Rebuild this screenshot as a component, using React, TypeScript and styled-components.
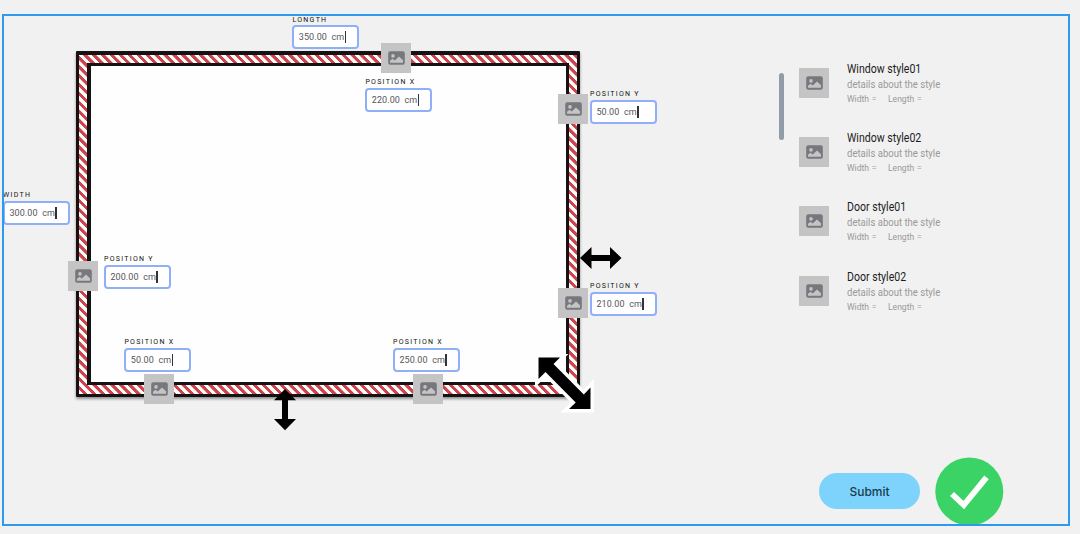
import React from "react";
import styled, { createGlobalStyle } from "styled-components";

const GlobalStyle = createGlobalStyle`
  * { box-sizing: border-box; }
  body { margin: 0; background: #f1f1f1; font-family: Roboto, sans-serif; overflow: hidden; }
`;

const Page = styled.main`
  width: 1080px;
  height: 534px;
  padding: 14px 9px 8px 2px;
`;

const Frame = styled.section`
  position: relative;
  display: flex;
  width: 1068px;
  height: 511.5px;

  &::after {
    content: "";
    position: absolute;
    inset: 0;
    border: 2px solid #2c9af0;
    pointer-events: none;
  }
`;

const Canvas = styled.div`
  position: relative;
  flex: 0 0 777px;
`;

const Wall = styled.div`
  position: absolute;
  left: 74px;
  top: 37px;
  width: 504px;
  height: 346px;
  padding: 8px 8px 9px;
  border: 3px solid #141212;
  border-top-width: 4px;
  border-radius: 1px;
  background: repeating-linear-gradient(45deg, #fff 0 2.8px, #d0434a 3.2px 5.9px, #fff 6.3px);
  box-shadow: 0 2px 3px rgba(0, 0, 0, 0.4);
`;

const Floor = styled.div`
  height: 100%;
  border: solid #141212;
  border-width: 3px 3px 3px 4px;
  background: #fefefe;
`;

const Placed = styled.div<{ $x: number; $y: number }>`
  position: absolute;
  left: ${(p) => p.$x - 2}px;
  top: ${(p) => p.$y - 14}px;
`;

const Thumb = styled.div`
  display: grid;
  place-items: center;
  flex: none;
  width: 30px;
  height: 30px;
  background: #c4c4c4;
`;

const FieldBox = styled.label`
  display: flex;
  flex-direction: column;
  gap: 1px;
  width: 67px;
`;

const FieldLabel = styled.span<{ $drop?: number }>`
  height: 9px;
  padding-top: ${(p) => p.$drop ?? 0}px;
  font-size: 7px;
  line-height: 8px;
  font-weight: 400;
  letter-spacing: 1.28px;
  white-space: nowrap;
  color: #111;
`;

const FieldValue = styled.span`
  display: flex;
  align-items: center;
  height: 24px;
  padding-left: 4.4px;
  border: 2px solid #8fb0f8;
  border-radius: 4px;
  background: #fff;
  color: #55565a;
  font-size: 9px;
  letter-spacing: 0.08px;
  white-space: pre;
`;

const Caret = styled.i`
  width: 1.4px;
  height: 12px;
  margin-left: 0.5px;
  background: #333;
`;

const Arrow = styled.svg`
  display: block;
  overflow: visible;
`;

const Side = styled.aside`
  display: flex;
  flex-direction: column;
  justify-content: space-between;
  flex: 1;
  padding: 47px 65px 0 0;
`;

const Catalog = styled.div`
  display: flex;
  gap: 15px;
`;

const ScrollThumb = styled.div`
  width: 5px;
  height: 67px;
  margin-top: 12px;
  border-radius: 3px;
  background: #919ca7;
`;

const List = styled.ul`
  display: flex;
  flex-direction: column;
  margin: 0;
  padding: 0;
  list-style: none;
`;

const Item = styled.li`
  display: flex;
  gap: 18px;
  height: 69.2px;
  padding-top: 7px;
`;

const Info = styled.div`
  margin-top: -8px;
  white-space: nowrap;
`;

const Title = styled.div`
  height: 17px;
  font-size: 12.5px;
  line-height: 18px;
  color: #1c1c1c;
  transform: scaleX(0.845);
  transform-origin: left;
`;

const Detail = styled.div`
  height: 14px;
  font-size: 11px;
  line-height: 16px;
  color: #999;
  transform: scaleX(0.868);
  transform-origin: left;
`;

const Sizes = styled.div`
  display: flex;
  height: 13px;
  font-size: 9.5px;
  line-height: 15px;
  color: #999;
`;

const Size = styled.span`
  width: 41px;
  transform: scaleX(0.9);
  transform-origin: left;
  word-spacing: 0.8px;
`;

const Actions = styled.div`
  display: flex;
  align-items: center;
  gap: 15px;
  margin-left: 40px;
`;

const Submit = styled.button`
  width: 101px;
  height: 36px;
  padding: 0;
  border: 0;
  border-radius: 18px;
  background: #7dd3fc;
  color: #1a3c4e;
  font: 500 12px Inter, sans-serif;
`;

const ImageIcon = () => (
  <svg width="17" height="14" viewBox="0 0 17 14">
    <rect x="0.2" y="0.3" width="16.6" height="13.4" rx="2" fill="#77787e" />
    <circle cx="5" cy="4.9" r="1.8" fill="#c4c4c4" />
    <path d="M2 11.8V9.8L4.6 7.7L6.7 9.4L11 5.4L15 9.3V11.8Z" fill="#c4c4c4" />
  </svg>
);

const fields = [
  { label: "LONGTH", value: "350.00", x: 292.4, y: 15, drop: 1 },
  { label: "POSITION X", value: "220.00", x: 365.4, y: 77.5 },
  { label: "POSITION Y", value: "50.00", x: 590, y: 89.5 },
  { label: "WIDTH", value: "300.00", x: 3, y: 190.5 },
  { label: "POSITION Y", value: "200.00", x: 104, y: 254.5 },
  { label: "POSITION Y", value: "210.00", x: 590, y: 282.3 },
  { label: "POSITION X", value: "50.00", x: 124.4, y: 338 },
  { label: "POSITION X", value: "250.00", x: 393, y: 338 },
];

const openings = [
  [381, 43],
  [558.4, 94],
  [68, 261],
  [558.4, 288],
  [144.3, 374],
  [413.2, 374],
];

const styles = ["Window style01", "Window style02", "Door style01", "Door style02"];

export default function App() {
  return (
    <>
      <GlobalStyle />
      <Page>
        <Frame>
          <Canvas>
            <Wall>
              <Floor />
            </Wall>
            {openings.map(([x, y]) => (
              <Placed key={`${x}-${y}`} $x={x} $y={y}>
                <Thumb>
                  <ImageIcon />
                </Thumb>
              </Placed>
            ))}
            {fields.map((f) => (
              <Placed key={`${f.x}-${f.y}`} $x={f.x} $y={f.y}>
                <FieldBox>
                  <FieldLabel $drop={f.drop}>{f.label}</FieldLabel>
                  <FieldValue>
                    {f.value}{"  cm"}
                    <Caret />
                  </FieldValue>
                </FieldBox>
              </Placed>
            ))}
            <Placed $x={580.4} $y={247}>
              <Arrow width="42" height="22" viewBox="0 0 42 22">
                <path d="M0 11L11.5 0V8H30V0L41.5 11L30 22V14H11.5V22Z" />
              </Arrow>
            </Placed>
            <Placed $x={274} $y={389}>
              <Arrow width="22" height="42" viewBox="0 0 22 42">
                <path d="M11 0L22 11.2H14V30H22L11 41.2L0 30H8V11.2H0Z" />
              </Arrow>
            </Placed>
            <Placed $x={538} $y={357}>
              <Arrow width="53" height="53" viewBox="0 0 53 53">
                <path
                  d="M0.5 0.5H22L15.5 7L45.8 37.5L52.5 30.5V52H31L37.7 45.5L7.5 15L0.5 22Z"
                  stroke="#fff"
                  strokeWidth="7"
                  strokeMiterlimit="10"
                  paintOrder="stroke"
                />
              </Arrow>
            </Placed>
          </Canvas>
          <Side>
            <Catalog>
              <ScrollThumb />
              <List>
                {styles.map((name) => (
                  <Item key={name}>
                    <Thumb>
                      <ImageIcon />
                    </Thumb>
                    <Info>
                      <Title>{name}</Title>
                      <Detail>details about the style</Detail>
                      <Sizes>
                        <Size>Width =</Size>
                        <Size>Length =</Size>
                      </Sizes>
                    </Info>
                  </Item>
                ))}
              </List>
            </Catalog>
            <Actions>
              <Submit>Submit</Submit>
              <svg width="69" height="69" viewBox="0 0 69 69">
                <circle cx="34.3" cy="34.5" r="34" fill="#3bd365" />
                <path d="M17 37L28.8 48L51.5 20.3" fill="none" stroke="#fff" strokeWidth="5.8" />
              </svg>
            </Actions>
          </Side>
        </Frame>
      </Page>
    </>
  );
}
